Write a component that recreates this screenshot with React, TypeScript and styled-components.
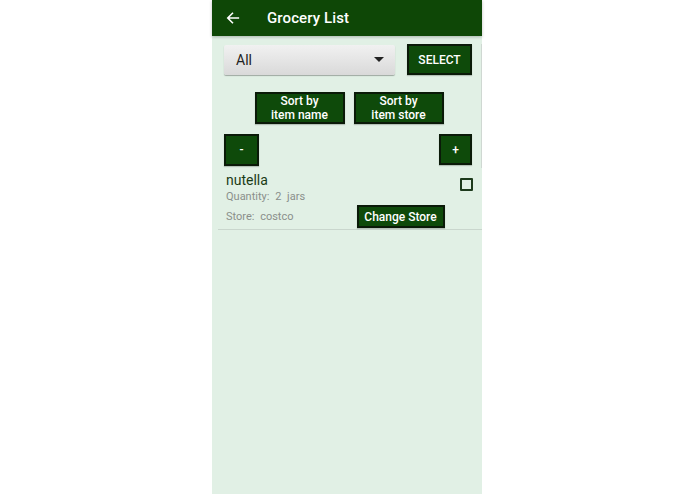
import styled, { createGlobalStyle } from 'styled-components';

const GlobalStyle = createGlobalStyle`
  html, body {
    margin: 0;
    padding: 0;
    background: #ffffff;
    font-family: Roboto, "Liberation Sans", sans-serif;
  }
`;

const Page = styled.div`
  display: flex;
  width: 695px;
  height: 494px;
  padding-left: 212px;
  box-sizing: border-box;
`;

const Phone = styled.div`
  width: 270px;
  height: 494px;
  background: #e1f0e5;
  display: flex;
  flex-direction: column;
`;

const AppBar = styled.div`
  height: 36px;
  background: #0e4706;
  display: flex;
  align-items: center;
  color: #ffffff;
  box-shadow: 0 1px 3px rgba(0, 0, 0, 0.25);
`;

const BackButton = styled.div`
  width: 55px;
  padding-left: 14px;
  box-sizing: border-box;
  display: flex;
  align-items: center;
`;

const Title = styled.div`
  font-size: 15px;
  font-weight: 500;
  letter-spacing: 0.1px;
`;

const Controls = styled.div`
  margin: 8px 0 0 12px;
  padding-right: 9px;
  border-right: 1px solid #cfd8d2;
  display: flex;
  flex-direction: column;
  width: 248px;
`;

const TopRow = styled.div`
  display: flex;
  align-items: center;
  justify-content: space-between;
`;

const Spinner = styled.div`
  width: 171px;
  height: 30px;
  box-sizing: border-box;
  border-radius: 2px;
  background: linear-gradient(#f1f1f1, #d9d9d9);
  box-shadow: 0 1px 1px rgba(0, 0, 0, 0.3);
  display: flex;
  align-items: center;
  justify-content: space-between;
  padding: 0 11px 0 12px;
  font-size: 14px;
  color: #222;
`;

const Caret = styled.div`
  width: 0;
  height: 0;
  border-left: 5px solid transparent;
  border-right: 5px solid transparent;
  border-top: 5px solid #222;
`;

const GreenButton = styled.div<{ $w: number; $h: number }>`
  width: ${(p) => p.$w}px;
  height: ${(p) => p.$h}px;
  box-sizing: border-box;
  background: #0e4a0a;
  border: 2px solid #0a1a08;
  color: #ffffff;
  font-size: 12px;
  font-weight: 500;
  line-height: 14px;
  text-align: center;
  display: flex;
  align-items: center;
  justify-content: center;
  box-shadow: 0 1px 1px rgba(0, 0, 0, 0.2);
`;

const SortRow = styled.div`
  display: flex;
  justify-content: center;
  gap: 9px;
  margin-top: 17px;
  padding-left: 2px;
`;

const StepRow = styled.div`
  display: flex;
  justify-content: space-between;
  margin-top: 10px;
  padding-bottom: 2px;
`;

const ItemRow = styled.div`
  margin-left: 6px;
  border-bottom: 1px solid #c9d6cd;
  padding: 4px 9px 1px 8px;
  display: flex;
  justify-content: space-between;
`;

const ItemInfo = styled.div`
  display: flex;
  flex-direction: column;
`;

const ItemName = styled.div`
  font-size: 14px;
  color: #1b3b16;
  line-height: 17px;
`;

const Detail = styled.div`
  font-size: 11px;
  color: #8a8f8b;
  line-height: 16px;
  word-spacing: 3px;
`;

const StoreLine = styled.div`
  display: flex;
  align-items: center;
  gap: 63px;
`;

const CheckBox = styled.div`
  width: 13px;
  height: 13px;
  box-sizing: border-box;
  border: 2px solid #1d3a1c;
  border-radius: 1px;
  margin-top: 6px;
`;

export default function App() {
  return (
    <>
      <GlobalStyle />
      <Page>
        <Phone>
          <AppBar>
            <BackButton>
              <svg width="14" height="14" viewBox="0 0 16 16" fill="none" stroke="#fff" strokeWidth="1.8">
                <path d="M15 8H2M8 2L2 8l6 6" />
              </svg>
            </BackButton>
            <Title>Grocery List</Title>
          </AppBar>
          <Controls>
            <TopRow>
              <Spinner>
                All
                <Caret />
              </Spinner>
              <GreenButton $w={65} $h={31}>SELECT</GreenButton>
            </TopRow>
            <SortRow>
              <GreenButton $w={90} $h={32}>
                Sort by
                <br />
                item name
              </GreenButton>
              <GreenButton $w={90} $h={32}>
                Sort by
                <br />
                item store
              </GreenButton>
            </SortRow>
            <StepRow>
              <GreenButton $w={35} $h={32}>-</GreenButton>
              <GreenButton $w={33} $h={31}>+</GreenButton>
            </StepRow>
          </Controls>
          <ItemRow>
            <ItemInfo>
              <ItemName>nutella</ItemName>
              <Detail>Quantity: 2 jars</Detail>
              <StoreLine>
                <Detail>Store: costco</Detail>
                <GreenButton $w={88} $h={23}>Change Store</GreenButton>
              </StoreLine>
            </ItemInfo>
            <CheckBox />
          </ItemRow>
        </Phone>
      </Page>
    </>
  );
}
